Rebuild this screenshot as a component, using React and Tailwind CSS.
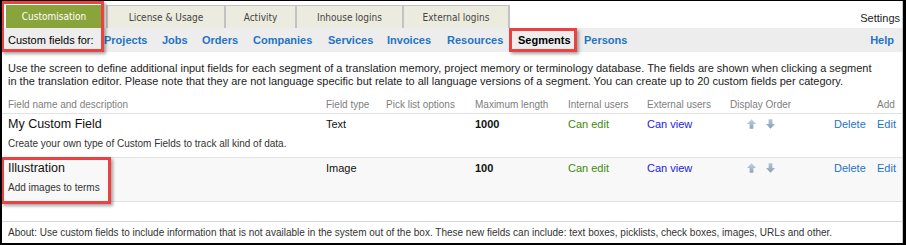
import React from "react";

const Up = () => (
  <svg width="9" height="10" viewBox="0 0 9 10">
    <defs>
      <linearGradient id="gu" x1="0" y1="0" x2="0" y2="1">
        <stop offset="0" stopColor="#c3d1df" />
        <stop offset="1" stopColor="#8ea5bd" />
      </linearGradient>
    </defs>
    <polygon points="4.5,0.3 9,5 6.4,5 6.4,9.7 2.6,9.7 2.6,5 0,5" fill="url(#gu)" />
  </svg>
);
const Down = () => (
  <svg width="9" height="10" viewBox="0 0 9 10">
    <defs>
      <linearGradient id="gd" x1="0" y1="0" x2="0" y2="1">
        <stop offset="0" stopColor="#b3c4d6" />
        <stop offset="1" stopColor="#869db6" />
      </linearGradient>
    </defs>
    <polygon points="2.6,0.3 6.4,0.3 6.4,5 9,5 4.5,9.7 0,5 2.6,5" fill="url(#gd)" />
  </svg>
);

const cols = "grid grid-cols-[318px_60px_89px_93px_79px_83px_104px_43px_1fr]";

function Row({ title, desc, type, max, bg }) {
  return (
    <div className={`${bg} border-b border-[#e2e2e2] h-[44px] pl-[6px]`}>
      <div className={`${cols} items-center h-[20px]`}>
        <div className="text-[12.5px] text-[#111]">{title}</div>
        <div className="text-[11px] text-[#111]">{type}</div>
        <div></div>
        <div className="text-[11px] font-bold text-[#111]">{max}</div>
        <div className="text-[11px] text-[#3d8a0a]">Can edit</div>
        <div className="text-[11px] text-[#1a1ae6]">Can view</div>
        <div className="flex items-center gap-[10px] pl-[17px]">
          <Up />
          <Down />
        </div>
        <div className="text-[11px] text-[#1f74c4]">Delete</div>
        <div className="text-[11px] text-[#1f74c4]">Edit</div>
      </div>
      <div className="text-[10px] text-[#333] leading-[13px] pt-[3px]">{desc}</div>
    </div>
  );
}

export default function App() {
  const redBox = "absolute border-[3px] border-[#ec4141] shadow-[2px_2px_3px_rgba(0,0,0,0.35)] pointer-events-none";
  const links = [
    ["Projects", "w-[58px]"],
    ["Jobs", "w-[40px]"],
    ["Orders", "w-[51px]"],
    ["Companies", "w-[75px]"],
    ["Services", "w-[59px]"],
    ["Invoices", "w-[60px]"],
    ["Resources", "w-[71px]"],
  ];
  return (
    <div
      className="relative w-[906px] h-[245px] bg-white border-t border-l-2 border-r-[3px] border-b-2 border-black overflow-hidden"
      style={{ fontFamily: '"Liberation Sans", Arial, sans-serif' }}
    >
      <div className="border-r border-[#c8c8c8] h-full flex flex-col">
        {/* Tabs strip */}
        <div className="flex items-end h-[27px] pl-[4px]">
          <div
            className="w-[96px] h-[23px] bg-[#8aa43c] text-white flex items-center justify-center text-[10px]"
            style={{ fontFamily: '"DejaVu Sans Condensed", "DejaVu Sans", sans-serif' }}
          >
            Customisation
          </div>
          <div
            className="flex ml-[4px] text-[10px] text-[#444]"
            style={{ fontFamily: '"DejaVu Sans Condensed", "DejaVu Sans", sans-serif' }}
          >
            <div className="w-[118px] h-[23px] bg-[#ecebdf] border-l-2 border-t border-[#c2c2c2] flex items-center justify-center">
              License &amp; Usage
            </div>
            <div className="w-[71px] h-[23px] bg-[#ecebdf] border-l-2 border-t border-[#c2c2c2] flex items-center justify-center">
              Activity
            </div>
            <div className="w-[107px] h-[23px] bg-[#ecebdf] border-l-2 border-t border-[#c2c2c2] flex items-center justify-center">
              Inhouse logins
            </div>
            <div className="w-[108px] h-[23px] bg-[#ecebdf] border-l-2 border-r-2 border-t border-[#c2c2c2] flex items-center justify-center">
              External logins
            </div>
          </div>
          <div className="flex-1 flex justify-end pb-[2px] pr-[2px] text-[11px] text-[#222]">Settings</div>
        </div>

        {/* Sub nav */}
        <div className="h-[24px] bg-[#ededed] flex items-center pl-[6px] pr-[8px] text-[11px]">
          <span className="text-black w-[96px] shrink-0">Custom fields for:</span>
          <div className="flex font-bold text-[#1f74c4] whitespace-nowrap">
            {links.map(([l, w]) => (
              <span key={l} className={`${w} shrink-0`}>
                {l}
              </span>
            ))}
            <span className="text-black w-[66px] shrink-0">Segments</span>
            <span>Persons</span>
          </div>
          <span className="ml-auto font-bold text-[#1f74c4]">Help</span>
        </div>

        {/* Description */}
        <div className="pl-[6px] pt-[10px] text-[11px] leading-[13px] text-[#222]">
          Use the screen to define additional input fields for each segment of a translation memory, project memory or terminology database. The fields are shown when clicking a segment
          <br />
          in the translation editor. Please note that they are not language specific but relate to all language versions of a segment. You can create up to 20 custom fields per category.
        </div>

        {/* Header */}
        <div className={`${cols} items-center pl-[6px] h-[19px] mt-[7px] border-b border-[#e2e2e2] text-[10px] text-[#808080]`}>
          <div>Field name and description</div>
          <div>Field type</div>
          <div>Pick list options</div>
          <div>Maximum length</div>
          <div>Internal users</div>
          <div>External users</div>
          <div>Display Order</div>
          <div></div>
          <div>Add</div>
        </div>

        <Row title="My Custom Field" desc="Create your own type of Custom Fields to track all kind of data." type="Text" max="1000" bg="bg-white" />
        <Row title="Illustration" desc="Add images to terms" type="Image" max="100" bg="bg-[#f8f8f8]" />

        <div className="h-[20px] border-b border-[#d8d8d8]"></div>
        <div className="pl-[6px] flex items-center h-[21px] text-[10px] text-[#333]">
          About: Use custom fields to include information that is not available in the system out of the box. These new fields can include: text boxes, picklists, check boxes, images, URLs and other.
        </div>
      </div>

      {/* Red highlight boxes */}
      <div className={`${redBox} left-[-1px] top-[0px] w-[103px] h-[51px]`}></div>
      <div className={`${redBox} left-[507px] top-[27px] w-[68px] h-[24px]`}></div>
      <div className={`${redBox} left-[-1px] top-[156px] w-[110px] h-[47px]`}></div>
    </div>
  );
}
